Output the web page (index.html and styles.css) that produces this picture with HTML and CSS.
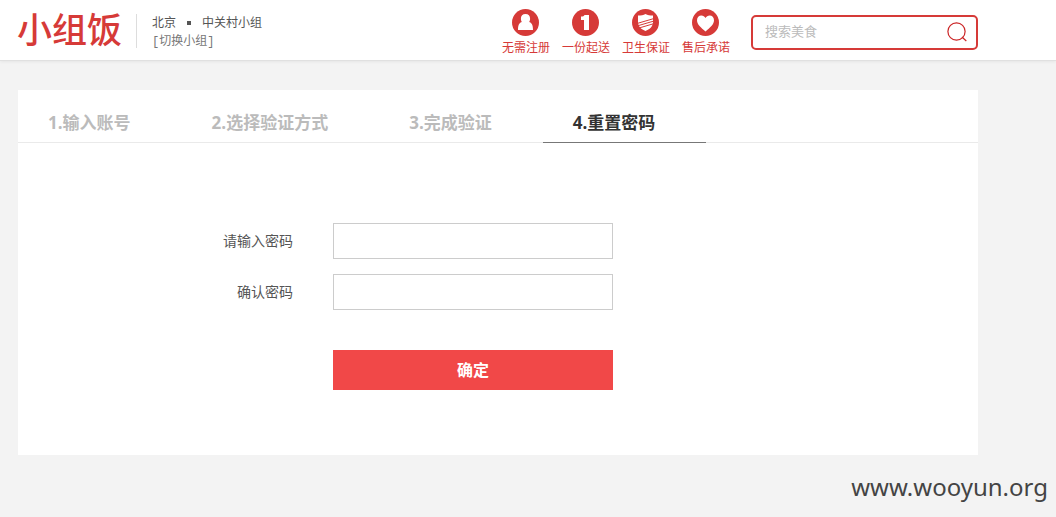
FILE: index.html
```html
<!DOCTYPE html>
<html lang="zh-CN">
<head>
<meta charset="utf-8">
<meta name="viewport" content="width=device-width, initial-scale=1">
<title>小组饭 - 重置密码</title>
<link rel="stylesheet" href="styles.css">
</head>
<body>
<header class="header">
  <div class="header-inner">
    <a class="logo" href="#">小组饭</a>
    <div class="location">
      <div class="place"><span>北京</span><i class="dot"></i><span>中关村小组</span></div>
      <a class="switch" href="#">[切换小组]</a>
    </div>
    <ul class="features">
      <li class="feature">
        <svg class="feature-icon" viewBox="0 0 27 27" aria-hidden="true"><circle cx="13.500" cy="13.500" r="13.500" fill="#d63a38"/><path fill="#fff" d="M13.500 5c-3 0-4.600 2-4.600 4.700 0 1.500.5 2.600 1 3.300-2.500.8-3.900 2.500-3.900 8h15c0-5.500-1.400-7.200-3.900-8 .5-.7 1-1.800 1-3.300C18.100 7 16.500 5 13.500 5z"/></svg>
        <span>无需注册</span>
      </li>
      <li class="feature">
        <svg class="feature-icon" viewBox="0 0 27 27" aria-hidden="true"><circle cx="13.500" cy="13.500" r="13.500" fill="#d63a38"/><path fill="#fff" d="M12.500 6H17v15h-5V11H9V7.500c2 0 3-.4 3.500-1.500z"/></svg>
        <span>一份起送</span>
      </li>
      <li class="feature">
        <svg class="feature-icon" viewBox="0 0 27 27" aria-hidden="true"><circle cx="13.500" cy="13.500" r="13.500" fill="#d63a38"/><path fill="#fff" d="M13.500 5c2 1.300 4.500 1.500 7.500 1.500V13c0 4.500-3.500 7.500-7.500 9-4-1.500-7.500-4.500-7.500-9V6.500c3 0 5.500-.2 7.500-1.500z"/><path fill="none" stroke="#d63a38" d="M5 14.500l17-5M5 17l17-5M6 19.300l16-4.700"/></svg>
        <span>卫生保证</span>
      </li>
      <li class="feature">
        <svg class="feature-icon" viewBox="0 0 27 27" aria-hidden="true"><circle cx="13.500" cy="13.500" r="13.500" fill="#d63a38"/><path fill="#fff" d="M13.500 22.500C9 18.500 5 15.500 5 11.200 5 8.500 7 6.500 9.300 6.500c1.900 0 3.300 1 4.200 2.500.9-1.500 2.300-2.500 4.200-2.500C20 6.500 22 8.500 22 11.200c0 4.300-4 7.300-8.500 11.300z"/></svg>
        <span>售后承诺</span>
      </li>
    </ul>
    <form class="search">
      <input class="search-input" type="text" placeholder="搜索美食" aria-label="搜索美食">
      <button class="search-button" type="button" aria-label="搜索">
        <svg class="search-icon" viewBox="0 0 20 20" aria-hidden="true"><circle cx="9.500" cy="9.500" r="8.600" fill="none" stroke="#cb2425" stroke-width="1.200"/><path d="M15 15l4.300 4" fill="none" stroke="#cb2425" stroke-width="1.200"/></svg>
      </button>
    </form>
  </div>
</header>
<main class="panel">
  <ol class="steps">
    <li class="step">1.输入账号</li>
    <li class="step">2.选择验证方式</li>
    <li class="step">3.完成验证</li>
    <li class="step step-active">4.重置密码</li>
  </ol>
  <form class="reset-form">
    <label class="label" for="password">请输入密码</label>
    <input class="field" id="password" type="password">
    <label class="label" for="confirm">确认密码</label>
    <input class="field" id="confirm" type="password">
    <button class="submit" type="button">确定</button>
  </form>
</main>
<footer class="site-mark">www.wooyun.org</footer>
</body>
</html>
```
FILE: styles.css
```css
* {
  box-sizing: border-box;
}

body {
  margin: 0;
  background: #f3f3f3;
  color: #555;
  font: 12px/18px "Liberation Sans", "Noto Sans CJK SC", sans-serif;
}

a {
  color: inherit;
  text-decoration: none;
}

ul,
ol {
  margin: 0;
  padding: 0;
  list-style: none;
}

.header {
  background: #fff;
  border-bottom: 1px solid #e0e0e0;
  box-shadow: 0 1px 3px rgba(0, 0, 0, 0.06);
}

.header-inner {
  display: flex;
  align-items: center;
  height: 60px;
  max-width: 961px;
  padding-top: 2px;
  margin-left: 17px;
}

.logo {
  color: #d63a38;
  font-size: 35px;
  font-weight: 500;
  line-height: 58px;
  white-space: nowrap;
}

.location {
  margin-left: 14px;
  padding-left: 15px;
  border-left: 1px solid #ddd;
  height: 34px;
  line-height: 18px;
  white-space: nowrap;
}

.place {
  display: flex;
  align-items: center;
}

.dot {
  width: 4px;
  height: 4px;
  margin: 0 11px;
  background: #555;
}

.switch {
  color: #777;
  font-family: "Liberation Mono", "Noto Sans CJK SC", monospace;
}

.features {
  display: flex;
  gap: 12px;
  margin-left: auto;
  color: #d63a38;
}

.feature {
  display: flex;
  flex-direction: column;
  align-items: center;
  line-height: 20px;
  white-space: nowrap;
}

.feature-icon {
  width: 27px;
  height: 27px;
  margin-top: 4px;
  margin-bottom: 2px;
}

.search {
  display: flex;
  align-items: center;
  width: 227px;
  height: 35px;
  margin: 2px 0 0 21px;
  border: 2px solid #d63a38;
  border-radius: 5px;
}

.search-input {
  flex: 1;
  min-width: 0;
  padding: 0 0 0 12px;
  border: 0;
  outline: 0;
  background: none;
  font: inherit;
  font-size: 13px;
}

.search-input::placeholder {
  color: #bbb;
}

.search-button {
  display: flex;
  padding: 0 9px;
  border: 0;
  background: none;
}

.search-icon {
  width: 20px;
  height: 20px;
}

.panel {
  max-width: 960px;
  min-height: 365px;
  margin: 29px 0 0 18px;
  background: #fff;
}

.steps {
  display: flex;
  border-bottom: 1px solid #eaeaea;
}

.step {
  margin-bottom: -1px;
  padding: 12px 51px 0 30px;
  height: 53px;
  border-bottom: 1px solid transparent;
  color: #bbb;
  font: bold 17px/42px "Open Sans", "Noto Sans CJK SC", sans-serif;
  white-space: nowrap;
}

.step-active {
  border-bottom-color: #777;
  color: #333;
}

.reset-form {
  display: grid;
  grid-template-columns: 275px 280px;
  column-gap: 40px;
  row-gap: 15px;
  padding: 80px 0 65px;
}

.label {
  font-size: 14px;
  line-height: 36px;
  text-align: right;
}

.field {
  height: 36px;
  padding: 0 10px;
  border: 1px solid #ccc;
  background: #fff;
  font: inherit;
}

.submit {
  grid-column: 2;
  height: 40px;
  margin-top: 25px;
  border: 0;
  background: #f14848;
  color: #fff;
  font: bold 16px/40px "Liberation Sans", "Noto Sans CJK SC", sans-serif;
}

.site-mark {
  padding: 15px 8px 13px;
  color: #444;
  font: 24px/34px "Noto Sans", sans-serif;
  text-align: right;
}
```
